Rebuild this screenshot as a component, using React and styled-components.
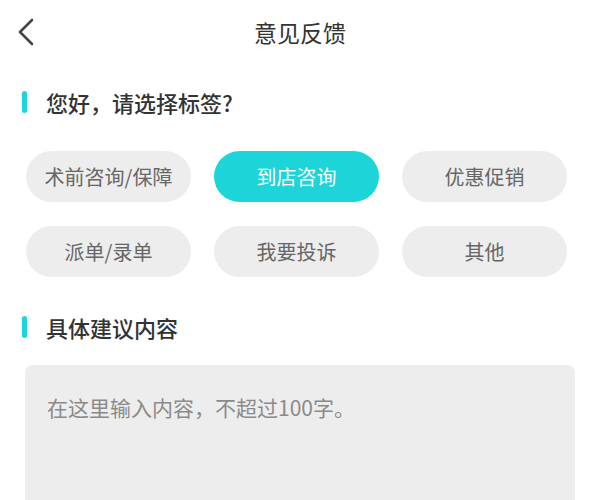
import { useState } from 'react'
import styled, { createGlobalStyle } from 'styled-components'

const GlobalStyle = createGlobalStyle`
	body {
		margin: 0;
		background: #ffffff;
		font-family: 'Noto Sans CJK SC', 'Noto Sans', sans-serif;
	}
`

const Page = styled.div`
	width: 600px;
	height: 500px;
	overflow: hidden;
	background: #ffffff;
`

const Header = styled.header`
	height: 64px;
	display: grid;
	grid-template-columns: 80px 1fr 80px;
	align-items: center;
`

const BackButton = styled.button`
	border: none;
	background: none;
	padding: 0 0 0 17px;
	height: 64px;
	display: flex;
	align-items: center;
	cursor: pointer;
`

const Title = styled.h1`
	margin: 0;
	text-align: center;
	font-size: 23px;
	font-weight: 400;
	color: #333333;
	line-height: 30px;
`

const SectionTitle = styled.h2`
	margin: ${(p) => p.$top}px 0 0;
	padding-left: 22px;
	display: flex;
	align-items: center;
	gap: 19px;
	height: 30px;
	font-size: 22px;
	font-weight: 500;
	color: #333333;
	line-height: 30px;
	&::before {
		content: '';
		width: 5px;
		height: 22px;
		border-radius: 3px;
		background: #1dd5d9;
	}
`

const TagGrid = styled.div`
	margin-top: 34px;
	padding-left: 26px;
	display: grid;
	grid-template-columns: repeat(3, 165px);
	grid-auto-rows: 51px;
	column-gap: 23px;
	row-gap: 24px;
`

const Tag = styled.button`
	border: none;
	border-radius: 26px;
	background: ${(p) => (p.$active ? '#1dd5d9' : '#ededed')};
	color: ${(p) => (p.$active ? '#ffffff' : '#666666')};
	font-family: inherit;
	font-size: 20px;
	cursor: pointer;
	padding: 0;
`

const TextArea = styled.textarea`
	display: block;
	box-sizing: border-box;
	margin: 23px 25px 0;
	width: 550px;
	height: 135px;
	border: none;
	border-radius: 8px 8px 0 0;
	background: #ededed;
	padding: 27px 22px;
	resize: none;
	font-family: inherit;
	font-size: 21px;
	line-height: 30px;
	color: #333333;
	outline: none;
	&::placeholder {
		color: #8a8a8a;
	}
`

const tags = ['术前咨询/保障', '到店咨询', '优惠促销', '派单/录单', '我要投诉', '其他']

function App() {
	const [active, setActive] = useState(1)
	const [text, setText] = useState('')
	return (
		<Page>
			<GlobalStyle />
			<Header>
				<BackButton aria-label='返回'>
					<svg width='18' height='28' viewBox='0 0 18 28' fill='none'>
						<polyline
							points='15,2 3,14 15,26'
							stroke='#444444'
							strokeWidth='2.6'
							strokeLinecap='round'
							strokeLinejoin='round'
						/>
					</svg>
				</BackButton>
				<Title>意见反馈</Title>
				<span />
			</Header>
			<SectionTitle $top={23}>您好，请选择标签?</SectionTitle>
			<TagGrid>
				{tags.map((t, i) => (
					<Tag key={t} $active={i === active} onClick={() => setActive(i)}>
						{t}
					</Tag>
				))}
			</TagGrid>
			<SectionTitle $top={35}>具体建议内容</SectionTitle>
			<TextArea
				value={text}
				maxLength={100}
				onChange={(e) => setText(e.target.value)}
				placeholder='在这里输入内容，不超过100字。'
			/>
		</Page>
	)
}

export default App
